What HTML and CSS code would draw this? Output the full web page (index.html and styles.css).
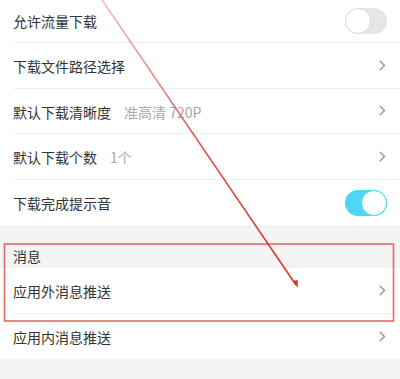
FILE: index.html
```html
<!DOCTYPE html>
<html lang="zh">
<head>
<meta charset="utf-8">
<title>下载设置</title>
<link rel="stylesheet" href="styles.css">
</head>
<body>
<div class="screen">
  <div class="page">
    <div class="group">
      <div class="row"><div class="row-inner"><span class="label">允许流量下载</span><span class="toggle"><span class="knob"></span></span></div></div>
      <div class="row"><div class="row-inner"><span class="label">下载文件路径选择</span><svg class="chev" viewBox="0 0 7 11" width="7" height="11"><path d="M1.2 1.2 L5.5 5.5 L1.2 9.8"/></svg></div></div>
      <div class="row"><div class="row-inner"><span class="label">默认下载清晰度</span><span class="value">准高清 720P</span><svg class="chev" viewBox="0 0 7 11" width="7" height="11"><path d="M1.2 1.2 L5.5 5.5 L1.2 9.8"/></svg></div></div>
      <div class="row"><div class="row-inner"><span class="label">默认下载个数</span><span class="value">1个</span><svg class="chev" viewBox="0 0 7 11" width="7" height="11"><path d="M1.2 1.2 L5.5 5.5 L1.2 9.8"/></svg></div></div>
      <div class="row last"><div class="row-inner"><span class="label">下载完成提示音</span><span class="toggle on"><span class="knob"></span></span></div></div>
    </div>
    <div class="gap"></div>
    <div class="section-header">消息</div>
    <div class="group">
      <div class="row"><div class="row-inner"><span class="label">应用外消息推送</span><svg class="chev" viewBox="0 0 7 11" width="7" height="11"><path d="M1.2 1.2 L5.5 5.5 L1.2 9.8"/></svg></div></div>
      <div class="row last"><div class="row-inner"><span class="label">应用内消息推送</span><svg class="chev" viewBox="0 0 7 11" width="7" height="11"><path d="M1.2 1.2 L5.5 5.5 L1.2 9.8"/></svg></div></div>
    </div>
    <div class="gap tail"></div>
  </div>
  <svg class="annot" viewBox="0 0 400 379" width="400" height="379">
    <defs>
      <linearGradient id="lg" x1="0" y1="0" x2="0" y2="1">
        <stop offset="0" stop-color="#e88a8a" stop-opacity="0.6"/>
        <stop offset="0.5" stop-color="#d9473f" stop-opacity="0.95"/>
        <stop offset="1" stop-color="#d42f26"/>
      </linearGradient>
    </defs>
    <rect x="4.5" y="244" width="389" height="77" fill="none" stroke="#e06a66" stroke-width="1.6"/>
    <line x1="100" y1="-3" x2="296" y2="285" stroke="url(#lg)" stroke-width="1.5" gradientUnits="userSpaceOnUse"/>
    <line x1="100" y1="-3" x2="296" y2="285" stroke="#d6362d" stroke-width="1.5" stroke-opacity="0.0"/>
    <path d="M293 281 L298 288 L297.5 280 Z" fill="#d42f26"/>
  </svg>
</div>
</body>
</html>
```
FILE: styles.css
```css
html, body {
  margin: 0;
  padding: 0;
  background: #ffffff;
}
body {
  font-family: "Noto Sans CJK SC", "Noto Sans", sans-serif;
  color: #333333;
}
.screen {
  position: relative;
  width: 400px;
  height: 379px;
  overflow: hidden;
  background: #f4f4f4;
}
.page {
  margin-top: -2.5px;
}
.group {
  background: #ffffff;
}
.row {
  height: 45.5px;
  padding-left: 13px;
  box-sizing: border-box;
}
.row-inner {
  height: 100%;
  box-sizing: border-box;
  border-bottom: 1px solid #efefef;
  display: flex;
  align-items: center;
  padding-right: 13px;
}
.row.last .row-inner {
  border-bottom: none;
}
.label {
  font-size: 14px;
  color: #333333;
  line-height: 20px;
  padding-top: 2px;
}
.value {
  font-size: 14px;
  color: #a8a8a8;
  margin-left: 13px;
  line-height: 20px;
  padding-top: 2px;
}
.chev {
  margin-left: auto;
  margin-right: 1px;
  fill: none;
  stroke: #9a9a9a;
  stroke-width: 1.5;
  stroke-linecap: round;
  stroke-linejoin: round;
}
.toggle {
  margin-left: auto;
  width: 42px;
  height: 26px;
  border-radius: 13px;
  background: #e6e6e6;
  display: flex;
  align-items: center;
  justify-content: flex-start;
  box-sizing: border-box;
  margin-top: 2px;
}
.toggle .knob {
  width: 26px;
  height: 26px;
  border-radius: 50%;
  background: #ffffff;
  border: 1px solid #dcdcdc;
  box-sizing: border-box;
}
.toggle.on {
  background: #4fd6f2;
  justify-content: flex-end;
}
.toggle.on .knob {
  border: 1.5px solid #4fd6f2;
}
.gap {
  height: 19px;
}
.section-header {
  height: 24px;
  padding-left: 13px;
  font-size: 14px;
  line-height: 24px;
  color: #333333;
}
.annot {
  position: absolute;
  left: 0;
  top: 0;
  pointer-events: none;
}
```
